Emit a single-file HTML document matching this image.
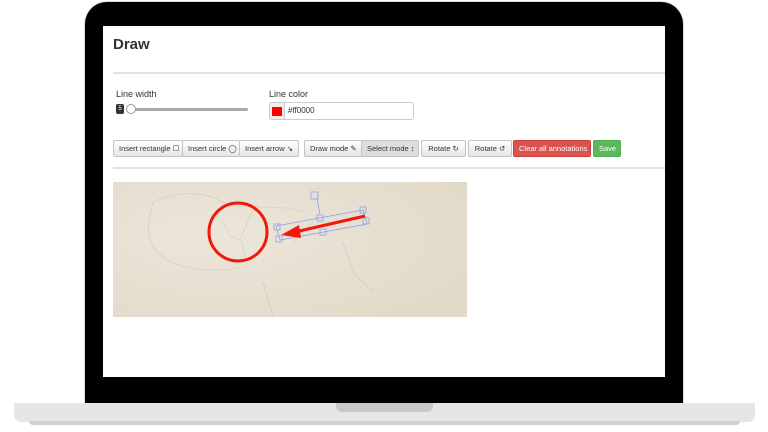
<!DOCTYPE html>
<html><head><style>
*{box-sizing:border-box;margin:0;padding:0}
body{width:768px;height:432px;background:#fff;position:relative;overflow:hidden;font-family:"Liberation Sans",sans-serif;color:#333}
.bezel{position:absolute;left:85px;top:2px;width:598px;height:402px;background:#000;border-radius:22px 22px 0 0;box-shadow:0 0 0 1px #ddd}
.screen{position:absolute;left:103px;top:26px;width:562px;height:351px;background:#fff;overflow:hidden}
.base{position:absolute;left:14px;top:403px;width:741px;height:19px;background:#e6e6e6;border-radius:0 0 7px 7px}
.shadow{position:absolute;left:29px;top:421px;width:711px;height:4px;background:#d0d0d0;border-radius:0 0 4px 4px}
.notch{position:absolute;left:336px;top:403px;width:97px;height:9px;background:#c8c8c8;border-radius:0 0 6px 6px}
.abs{position:absolute}
h1{position:absolute;left:10px;top:10px;font-size:15px;font-weight:bold;color:#333}
.hr{position:absolute;left:10px;width:552px;height:2px;background:#e2e2e2}
.lbl{font-size:9px;color:#333}
.btn{position:absolute;top:114px;height:17px;font-size:7.5px;line-height:15px;padding:0 5px;border:1px solid #c4c4c4;background:linear-gradient(#fff,#e6e6e6);color:#333;white-space:nowrap;border-radius:2px;text-align:center}
</style></head><body>
<div class="bezel"></div>
<div class="base"></div><div class="shadow"></div><div class="notch"></div>
<div class="screen">
<h1>Draw</h1>
<div class="hr" style="top:46px"></div>
<div class="abs lbl" style="left:13px;top:63px">Line width</div>
<div class="abs" style="left:13px;top:78px;width:8px;height:10px;background:#333;color:#fff;font-size:6px;text-align:center;line-height:10px;border-radius:2px">5</div>
<div class="abs" style="left:26px;top:82px;width:119px;height:3px;background:#aaa;border-radius:2px"></div>
<div class="abs" style="left:23px;top:78px;width:10px;height:10px;border:1px solid #999;background:#fff;border-radius:50%"></div>
<div class="abs lbl" style="left:166px;top:63px">Line color</div>
<div class="abs" style="left:166px;top:76px;width:145px;height:18px;border:1px solid #ccc;border-radius:3px;background:#fff"></div>
<div class="abs" style="left:166px;top:76px;width:16px;height:18px;background:#eee;border:1px solid #ccc;border-radius:3px 0 0 3px"></div>
<div class="abs" style="left:169px;top:81px;width:10px;height:9px;background:#f00"></div>
<div class="abs" style="left:185px;top:80px;font-size:8px">#ff0000</div>
<div class="btn" style="left:10px;width:70px">Insert rectangle ☐</div>
<div class="btn" style="left:79px;width:58px">Insert circle ◯</div>
<div class="btn" style="left:136px;width:60px">Insert arrow ↘</div>
<div class="btn" style="left:201px;width:58px">Draw mode ✎</div>
<div class="btn" style="left:258px;width:58px;background:#ddd">Select mode ↕</div>
<div class="btn" style="left:318px;width:45px">Rotate ↻</div>
<div class="btn" style="left:365px;width:44px">Rotate ↺</div>
<div class="btn" style="left:410px;width:78px;background:#d9534f;border-color:#c9403b;color:#fff">Clear all annotations</div>
<div class="btn" style="left:490px;width:28px;background:#5cb85c;border-color:#4cae4c;color:#fff">Save</div>
<div class="hr" style="top:141px"></div>
<svg class="abs" style="left:10px;top:156px" width="354" height="135" viewBox="0 0 354 135">
<defs><radialGradient id="g" cx="0.3" cy="0.4" r="0.8"><stop offset="0" stop-color="#ece6da"/><stop offset="1" stop-color="#e2d9c8"/></radialGradient></defs>
<rect width="354" height="135" fill="url(#g)"/>
<path d="M40 20 C60 10 90 8 110 20 C130 30 160 20 190 30 M40 20 C35 40 30 60 50 75 C70 90 110 90 130 85 M110 40 L118 55 L128 58 L133 75 M140 28 L128 55 M200 40 L180 60 M150 100 L160 135 M230 60 L240 90 L260 110" stroke="#a49b88" stroke-width="0.6" fill="none" opacity="0.35"/>
<circle cx="125" cy="50" r="29" fill="none" stroke="#f0190c" stroke-width="3"/>
<g stroke="#8aa6e6" stroke-width="0.8" fill="none">
<polygon points="163,44 250,28 254,42 167,58"/>
<rect x="161" y="42" width="6" height="6"/><rect x="163" y="54" width="6" height="6"/>
<rect x="247" y="25" width="6" height="6"/><rect x="250" y="36" width="6" height="6"/>
<rect x="204" y="33" width="6" height="6"/><rect x="207" y="47" width="6" height="6"/>
<line x1="204" y1="16" x2="207" y2="33"/><rect x="198" y="10" width="7" height="7"/>
</g>
<line x1="252" y1="34" x2="182" y2="50" stroke="#f0190c" stroke-width="3"/>
<polygon points="168,53 186,43 188,56" fill="#f0190c"/>
</svg>
</div>
</body></html>
